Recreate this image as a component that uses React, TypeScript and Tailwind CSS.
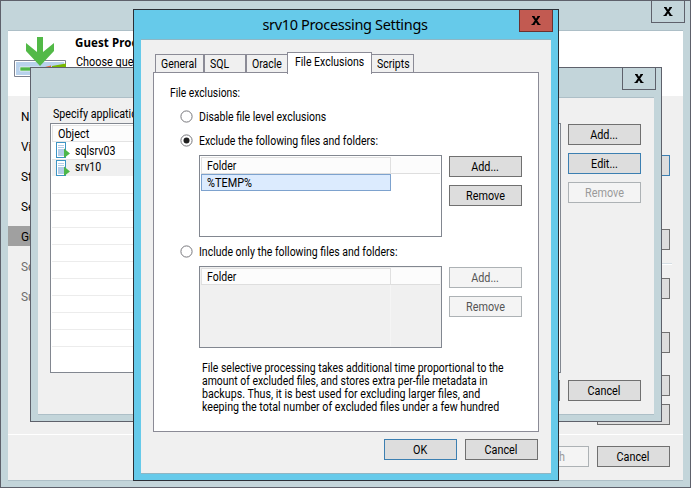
import type { ReactNode } from "react";
import clsx from "clsx";

const steps = [
    { name: "Name" },
    { name: "Virtual" },
    { name: "Storage" },
    { name: "Secondary" },
    { name: "Guest", active: true },
    { name: "Schedule", disabled: true },
    { name: "Summary", disabled: true },
];

const objects = ["sqlsrv03", "srv10"];

const noteLines = [
    { text: "File selective processing takes additional time proportional to the", className: "scale-x-[0.835]" },
    { text: "amount of excluded files, and stores extra per-file metadata in", className: "scale-x-[0.835]" },
    { text: "backups. Thus, it is best used for excluding larger files, and", className: "scale-x-[0.853]" },
    { text: "keeping the total number of excluded files under a few hundred", className: "scale-x-[0.853]" },
];

// narrow ui font
function Label({ children, className = "scale-x-[0.84]" }: { children: ReactNode; className?: string }) {
    return <span className={clsx("inline-block origin-left whitespace-nowrap", className)}>{children}</span>;
}

function Button({ children, primary, disabled, faint, className }: { children?: ReactNode; primary?: boolean; disabled?: boolean; faint?: boolean; className?: string }) {
    return (
        <button
            disabled={disabled}
            className={clsx(
                "block h-[21px] w-[73px] shrink-0 border text-center leading-[20px] whitespace-nowrap",
                primary && "border-[#3c7fb1] bg-[#dddddd]",
                disabled && "border-[#adb2b5] bg-[#f4f4f4]",
                disabled && (faint ? "text-[#9a9a9a]" : "text-[#555555]"),
                !primary && !disabled && "border-[#707070] bg-[#dddddd]",
                className
            )}
        >
            {children && <span className="inline-block scale-x-[0.865]">{children}</span>}
        </button>
    );
}

function CloseButton({ className }: { className?: string }) {
    return (
        <button className={clsx("flex h-[22px] w-[34px] items-center justify-center border border-t-0", className)}>
            <svg width="10" height="9" viewBox="0 0 10 9" fill="none" stroke="#000">
                <path d="M1 .5h2.5M6.5.5H9M.5 8.5h3M6.5 8.5h3" />
                <path d="M2.2 .5 7.8 8.5M7.8 .5 2.2 8.5" strokeWidth="2.1" />
            </svg>
        </button>
    );
}

function Tab({ children, className }: { children: ReactNode; className?: string }) {
    return (
        <div className={clsx("h-[18px] border border-b-0 border-[#8b8b96] bg-[#f0f0f0] pl-[5px] leading-[17px] whitespace-nowrap", className)}>
            <Label>{children}</Label>
        </div>
    );
}

function Radio({ checked, children, className }: { checked?: boolean; children: ReactNode; className?: string }) {
    return (
        <div className={clsx("flex h-[14px] items-center gap-[6px] pl-[26px]", className)}>
            <svg width="13" height="13" viewBox="0 0 13 13" className="mb-px">
                <circle cx="6.5" cy="6.5" r="5.6" fill="#fff" stroke="#77777c" />
                {checked && <circle cx="6.5" cy="6.5" r="3" fill="#202020" />}
            </svg>
            <span className="h-[14px] leading-[14px]">
                <Label>{children}</Label>
            </span>
        </div>
    );
}

function FolderList({ disabled, rows }: { disabled?: boolean; rows: string[] }) {
    return (
        <div className={clsx("h-[82px] w-[243px] border border-[#828790] p-px", disabled ? "bg-[#f0f0f0]" : "bg-white")}>
            <div className="flex h-[17px] border-b border-[#dedede] bg-[#fcfcfc]">
                <div className="w-[190px] border-t border-r border-l border-[#e0e0e0] pl-[5px] leading-[15px]">
                    <Label>Folder</Label>
                </div>
            </div>
            {rows.map((row) => (
                <div key={row} className="h-[17px] w-[190px] border border-[#7da2ce] bg-[#dcebfe] pl-[5px] leading-[16px]">
                    <Label className="scale-x-[0.87]">{row}</Label>
                </div>
            ))}
            {disabled && <div className="h-[61px] w-[190px] border-r border-[#f5f5f5]" />}
        </div>
    );
}

function ServerIcon() {
    return (
        <svg width="15" height="17" viewBox="0 0 15 17" shapeRendering="crispEdges">
            <path d="M.5.5h9v15h-9z" fill="#fff" stroke="#3d94c4" />
            <path d="M2 3.5h6M2 5.5h6" stroke="#b4cde8" />
            <path d="M2 7h6v7H2z" fill="#b4cde8" />
            <path d="M8 6.5 14 11.5 8 16z" fill="#4cb748" shapeRendering="auto" />
        </svg>
    );
}

function WizardIcon() {
    return (
        <svg width="54" height="42" viewBox="0 0 54 42">
            <path d="M.5 24.5h51v16H.5z" fill="#fff" stroke="#7d8290" />
            <path d="M2 26h48v13H2z" fill="#b9d2ec" />
            <path d="M6 31h20v4H6z" fill="#4fb649" stroke="#fff" strokeWidth=".6" />
            <path d="M31 31 37 29.5V31z" fill="#e9693c" />
            <path d="M38 31v-1l14-2.5v3.5z" fill="#78b800" />
            <path d="M23 1h6v15l11-9v8L26 30 12 15V7l11 9z" fill="#52b947" />
        </svg>
    );
}

function WizardWindow() {
    return (
        <div className="absolute inset-0 border border-[#5e616b] bg-[#c3d5da]">
            <div className="flex h-[29px] items-start justify-end pr-[5px]">
                <CloseButton className="border-[#5e616b]" />
            </div>
            <div className="mx-[7px] flex h-[451px] flex-col border-y border-[#adbfc7] bg-[#f0f0f0]">
                <div className="flex h-[65px] shrink-0 bg-white pt-[5px] pl-[6px]">
                    <WizardIcon />
                    <div className="pl-[7px] whitespace-nowrap">
                        <h1 className="font-['Noto_Sans'] text-[11.5px] leading-[13px] font-bold tracking-[0.1px]">Guest Processing</h1>
                        <p className="mt-[6px] ml-px h-[14px] leading-[14px]">
                            <Label className="scale-x-[0.87]">Choose guest</Label>
                        </p>
                    </div>
                </div>
                <div className="flex h-[338px] shrink-0 justify-between">
                    <div className="w-[125px] pt-[10px]">
                        {steps.map((step) => (
                            <div
                                key={step.name}
                                className={clsx("mb-[10px] h-5 pl-[13px] leading-[22px]", step.active && "bg-[#a0a0a0]", step.disabled && "text-[#6d6d6d]")}
                            >
                                <Label className="scale-x-[0.95]">{step.name}</Label>
                            </div>
                        ))}
                    </div>
                    <div className="flex w-[86px] flex-col pt-[59px]">
                        <Button primary />
                        <Button className="mt-[53px]" />
                        <div className="mt-[13px] h-[2px] w-[75px] shrink-0 border-t border-b border-t-[#d5dfe5] border-b-white" />
                        <Button className="mt-[13px]" />
                        <Button className="mt-[33px]" />
                        <Button className="mt-[22px]" />
                        <Button className="mt-[8px]" />
                    </div>
                </div>
                <div className="flex grow justify-end gap-2 border-t border-white pt-[11px] pr-[13px]">
                    <Button disabled faint className="pr-[4px]">Finish</Button>
                    <Button>Cancel</Button>
                </div>
            </div>
        </div>
    );
}

function ObjectsWindow() {
    return (
        <div className="absolute top-[67px] left-[30px] h-[355px] w-[632px] border border-[#5e616b] bg-[#c3d5da]">
            <div className="flex h-[29px] items-start justify-end pr-[5px]">
                <CloseButton className="border-[#5e616b]" />
            </div>
            <div className="mx-[7px] h-[318px] border-y border-[#adbfc7] bg-[#f0f0f0] pt-[9px] pl-3">
                <p className="h-[14px] pl-[3px] leading-[14px]">
                    <Label className="scale-x-[0.855]">Specify applications</Label>
                </p>
                <div className="mt-[2px] flex gap-[7px]">
                    <div className="h-[250px] w-[511px] border border-[#828790] bg-white p-px">
                        <div className="h-[17px] border border-[#e3e3e3] bg-[#fcfcfc] pl-[5px] leading-[16px]">
                            <Label className="scale-x-[0.87]">Object</Label>
                        </div>
                        {objects.map((name, i) => (
                            <div key={name} className={clsx("flex h-[17px] items-center gap-[4px] pl-[4px] leading-[16px]", i === 1 && "border-t border-[#e3e3e3] bg-[#f0f0f0] leading-[15px]")}>
                                <ServerIcon />
                                <Label className={clsx("scale-x-[0.85]", i === 1 && "pb-[2px]")}>{name}</Label>
                            </div>
                        ))}
                        {Array.from({ length: 11 }, (_, i) => (
                            <div key={i} className={clsx("h-[17px]", i > 0 && "border-t border-[#ececec]")} />
                        ))}
                    </div>
                    <div className="flex flex-col gap-2 pt-px">
                        <Button>Add...</Button>
                        <Button primary>Edit...</Button>
                        <Button disabled faint>Remove</Button>
                    </div>
                </div>
                <div className="mt-[7px] flex justify-end gap-2 pr-[13px]">
                    <Button />
                    <Button>Cancel</Button>
                </div>
            </div>
        </div>
    );
}

function SettingsDialog() {
    return (
        <div className="absolute top-[9px] left-[133px] h-[472px] w-[426px] border border-[#2b2f36] bg-[#66caea]">
            <div className="flex h-[29px] items-start justify-end pr-[5px]">
                <h1 className="grow pl-[62px] text-center font-['Noto_Sans'] text-[14.5px] leading-[29px] tracking-[-0.33px] whitespace-nowrap">srv10 Processing Settings</h1>
                <div className="w-[25px]" />
                <CloseButton className="border-[#6b302f] bg-[#c25a51]" />
            </div>
            <div className="mx-[7px] h-[435px] border-y border-[#8fb6c4] bg-[#f0f0f0] pt-3 pl-3">
                <div className="relative z-10 -mb-[2px] flex items-end">
                    <Tab className="mb-[2px] ml-[2px] w-[49px]">General</Tab>
                    <Tab className="mb-[2px] w-[42px]">SQL</Tab>
                    <Tab className="mb-[2px] w-[41px] border-r-0">Oracle</Tab>
                    <div className="h-[22px] w-[85px] border border-b-0 border-[#8b8b96] bg-white pl-[7px] leading-[18px]">
                        <Label>File Exclusions</Label>
                    </div>
                    <Tab className="mb-[2px] w-[42px] border-l-0">Scripts</Tab>
                </div>
                <div className="h-[360px] w-[386px] border border-[#8b8b96] bg-white pt-[13px] pl-4">
                    <p className="h-[14px] leading-[14px]">
                        <Label className="scale-x-[0.825]">File exclusions:</Label>
                    </p>
                    <Radio className="-ml-4 mt-[10px]">Disable file level exclusions</Radio>
                    <Radio checked className="-ml-4 mt-[10px]">Exclude the following files and folders:</Radio>
                    <div className="mt-[7px] flex gap-[7px] pl-[29px]">
                        <FolderList rows={["%TEMP%"]} />
                        <div className="flex flex-col gap-2 pt-px">
                            <Button>Add...</Button>
                            <Button>Remove</Button>
                        </div>
                    </div>
                    <Radio className="-ml-4 mt-[8px]">Include only the following files and folders:</Radio>
                    <div className="mt-[7px] flex gap-[7px] pl-[29px]">
                        <FolderList disabled rows={[]} />
                        <div className="flex flex-col gap-2 pt-px">
                            <Button disabled>Add...</Button>
                            <Button disabled>Remove</Button>
                        </div>
                    </div>
                    <div className="mt-[13px] h-[52px] pl-8">
                        {noteLines.map((line) => (
                            <p key={line.text} className="h-[13px] leading-[13px]">
                                <Label className={line.className}>{line.text}</Label>
                            </p>
                        ))}
                    </div>
                </div>
                <div className="mt-[7px] flex justify-end gap-2 pr-[13px]">
                    <Button primary>OK</Button>
                    <Button>Cancel</Button>
                </div>
            </div>
        </div>
    );
}

export default function App() {
    return (
        <main className="relative h-[488px] w-[691px] overflow-hidden font-[Roboto,sans-serif] text-[12.5px] text-black">
            <WizardWindow />
            <ObjectsWindow />
            <SettingsDialog />
        </main>
    );
}
